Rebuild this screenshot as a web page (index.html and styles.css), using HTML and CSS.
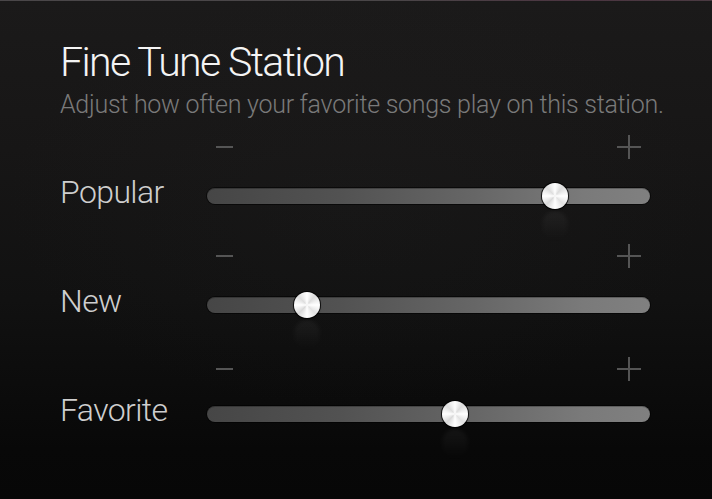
FILE: index.html
```html
<!DOCTYPE html>
<html>
<head>
<meta charset="utf-8">
<link rel="stylesheet" href="styles.css">
</head>
<body>
<div class="screen">
  <div class="topline"></div>
  <header class="header">
    <h1 class="title">Fine Tune Station</h1>
    <p class="subtitle">Adjust how often your favorite songs play on this station.</p>
  </header>
  <section class="rows">
    <div class="row">
      <div class="signs">
        <svg class="minus" width="17" height="24" viewBox="0 0 17 24"><line x1="0" y1="12" x2="17" y2="12"/></svg>
        <svg class="plus" width="24" height="24" viewBox="0 0 24 24"><line x1="0" y1="12" x2="24" y2="12"/><line x1="12" y1="0" x2="12" y2="24"/></svg>
      </div>
      <div class="label">Popular</div>
      <div class="slider"><div class="track"></div><div class="thumb" style="left: 78.6%"></div></div>
    </div>
    <div class="row">
      <div class="signs">
        <svg class="minus" width="17" height="24" viewBox="0 0 17 24"><line x1="0" y1="12" x2="17" y2="12"/></svg>
        <svg class="plus" width="24" height="24" viewBox="0 0 24 24"><line x1="0" y1="12" x2="24" y2="12"/><line x1="12" y1="0" x2="12" y2="24"/></svg>
      </div>
      <div class="label">New</div>
      <div class="slider"><div class="track"></div><div class="thumb" style="left: 22.6%"></div></div>
    </div>
    <div class="row row-last">
      <div class="signs">
        <svg class="minus" width="17" height="24" viewBox="0 0 17 24"><line x1="0" y1="12" x2="17" y2="12"/></svg>
        <svg class="plus" width="24" height="24" viewBox="0 0 24 24"><line x1="0" y1="12" x2="24" y2="12"/><line x1="12" y1="0" x2="12" y2="24"/></svg>
      </div>
      <div class="label">Favorite</div>
      <div class="slider"><div class="track"></div><div class="thumb" style="left: 56%"></div></div>
    </div>
  </section>
</div>
</body>
</html>
```
FILE: styles.css
```css
html, body {
  margin: 0;
  padding: 0;
  width: 712px;
  height: 499px;
  overflow: hidden;
  background: #0a0a0a;
}
.screen {
  width: 712px;
  height: 499px;
  font-family: Roboto, "Liberation Sans", sans-serif;
  font-weight: 300;
  background:
    radial-gradient(ellipse 500px 300px at 50% 40%, rgba(40,40,40,0.15), rgba(0,0,0,0) 70%),
    linear-gradient(180deg, #1b1a1a 0%, #171616 30%, #111111 60%, #080808 90%, #070707 100%);
  display: flex;
  flex-direction: column;
}
.topline {
  height: 1px;
  background: linear-gradient(90deg, #4a4749 0%, #4a4648 55%, #4c3541 80%, #4a3a42 100%);
}
.header {
  padding: 37px 0 0 60px;
}
.title {
  margin: 0;
  font-size: 41px;
  line-height: 48px;
  font-weight: 300;
  letter-spacing: -1.6px;
  color: #f4f4f4;
}
.subtitle {
  margin: 4px 0 0 0;
  font-size: 25px;
  line-height: 30px;
  font-weight: 300;
  letter-spacing: -0.27px;
  color: #7a7a7a;
}
.rows {
  margin-top: 15px;
  padding-left: 60px;
  display: flex;
  flex-direction: column;
  gap: 35px;
}
.row {
  display: grid;
  grid-template-columns: 147px 443px;
  grid-template-rows: 24px 26px;
  row-gap: 24px;
}
.row-last {
  margin-top: 4px;
  row-gap: 20px;
}
.signs {
  grid-column: 2;
  grid-row: 1;
  display: flex;
  justify-content: space-between;
  align-items: center;
  padding: 0 9px;
}
.signs svg line {
  stroke: #555555;
  stroke-width: 2;
}
.plus line {
  stroke-width: 1.5;
}
.label {
  grid-column: 1;
  grid-row: 2;
  align-self: start;
  font-size: 32px;
  line-height: 18px;
  letter-spacing: -0.6px;
  color: #cecece;
}
.slider {
  grid-column: 2;
  grid-row: 2;
  position: relative;
  display: flex;
  align-items: center;
}
.track {
  flex: 1;
  height: 16px;
  border-radius: 8px;
  background: linear-gradient(90deg, #464646 0%, #525252 30%, #666666 60%, #7a7a7a 85%, #808080 100%);
  box-shadow: 0 0 0 1px rgba(0,0,0,0.55), inset 0 1px 0 rgba(0,0,0,0.25);
}
.thumb {
  position: absolute;
  top: 0;
  width: 26px;
  height: 26px;
  margin-left: -13px;
  border-radius: 50%;
  background:
    radial-gradient(circle at 50% 50%, rgba(255,255,255,0.9) 0, rgba(255,255,255,0) 3px),
    conic-gradient(from 0deg, #ffffff 0deg, #dcdcdc 40deg, #ffffff 90deg, #e2e2e2 135deg, #ffffff 180deg, #d9d9d9 225deg, #ffffff 270deg, #dedede 315deg, #ffffff 360deg);
  box-shadow: 0 0 0 1px rgba(0,0,0,0.8), 0 1px 2px rgba(0,0,0,0.6);
}
.thumb::after {
  content: "";
  position: absolute;
  left: 0;
  top: 28px;
  width: 26px;
  height: 30px;
  border-radius: 13px;
  background: linear-gradient(180deg, rgba(255,255,255,0.05), rgba(255,255,255,0));
  filter: blur(2px);
}
```
